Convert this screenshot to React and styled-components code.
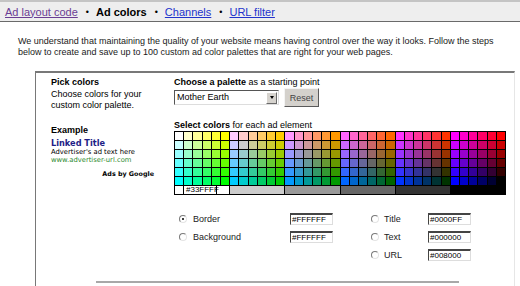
import styled, { createGlobalStyle } from 'styled-components';

const GlobalStyle = createGlobalStyle`
  html, body { margin: 0; padding: 0; background: #fff; }
  body { font-family: "Liberation Sans", Arial, sans-serif; color: #000; }
`;

const TabBar = styled.div`
  display: flex;
  align-items: center;
  height: 19px;
  padding-left: 5px;
  background: #eeeeee;
  border-top: 2px solid #c4c4c4;
  border-bottom: 1px solid #6a6a6a;
  font-size: 11px;
  white-space: nowrap;
`;

const TabLink = styled.a`
  color: ${p => (p.$visited ? '#6a3d94' : '#2233cc')};
  text-decoration: underline;
  cursor: pointer;
`;

const TabCurrent = styled.span`
  font-weight: bold;
`;

const Dot = styled.span`
  margin: 0 7px 0 8px;
  font-size: 9px;
`;

const Intro = styled.p`
  margin: 14px 0 0 18px;
  font-size: 9px;
  line-height: 11px;
  white-space: nowrap;
  color: #1a1a1a;
`;

const Panel = styled.div`
  margin: 13px 0 0 35px;
  width: 478px;
  border-top: 2px solid #787878;
  border-left: 1px solid #787878;
  border-right: 1px solid #e6e6e6;
  min-height: 220px;
`;

const PanelBody = styled.div`
  display: flex;
  padding-top: 4px;
`;

const LeftCol = styled.div`
  width: 123px;
  padding-left: 15px;
  font-size: 9px;
  line-height: 11.5px;
`;

const RightCol = styled.div`
  flex: 1;
  font-size: 9px;
  line-height: 11px;
`;

const Heading = styled.div`
  white-space: nowrap;
  margin-top: ${p => p.$top || 0}px;
  b { font-weight: bold; }
`;

const AdBox = styled.div`
  width: 103px;
  margin-top: 3px;
  font-family: "DejaVu Sans", Verdana, sans-serif;
`;

const AdTitle = styled.div`
  color: #1e1e86;
  font-weight: bold;
  font-size: 8.2px;
  line-height: 9px;
`;

const AdLine = styled.div`
  color: ${p => p.$color || '#000'};
  font-size: 6.8px;
  line-height: 8.4px;
  white-space: nowrap;
`;

const AdsBy = styled.div`
  text-align: right;
  font-weight: bold;
  font-size: 6.4px;
  line-height: 8px;
  margin-top: 5px;
`;

const SelectRow = styled.div`
  display: flex;
  align-items: center;
  gap: 5px;
  height: 19px;
`;

const FakeSelect = styled.div`
  display: flex;
  align-items: center;
  justify-content: space-between;
  box-sizing: border-box;
  width: 105px;
  height: 15px;
  padding-left: 2px;
  background: #fff;
  border: 1px solid;
  border-color: #555 #ddd #ddd #555;
  font-size: 9px;
`;

const SelectArrow = styled.span`
  display: flex;
  align-items: center;
  justify-content: center;
  box-sizing: border-box;
  width: 11px;
  height: 12px;
  background: #d6d3ce;
  border: 1px solid;
  border-color: #fff #6a6a6a #6a6a6a #fff;
  margin-right: 1px;
  &::after {
    content: '';
    border-left: 2.5px solid transparent;
    border-right: 2.5px solid transparent;
    border-top: 3px solid #000;
  }
`;

const Button = styled.button`
  box-sizing: border-box;
  width: 35px;
  height: 19px;
  padding: 0;
  background: #d4d1cc;
  border: 1px solid;
  border-color: #f4f4f4 #5a5a5a #5a5a5a #f4f4f4;
  font-family: "Liberation Sans", Arial, sans-serif;
  font-size: 9px;
  color: #444;
`;

const Palette = styled.div`
  position: relative;
  display: grid;
  grid-template-columns: repeat(36, 1fr);
  grid-auto-rows: 8px;
  gap: 1px;
  padding: 1px;
  width: 332px;
  box-sizing: border-box;
  background: #000;
`;

const Swatch = styled.div`
  position: relative;
  background: ${p => p.$c};
  grid-column: span ${p => p.$span || 1};
`;

const HexTip = styled.span`
  position: absolute;
  left: 8px;
  top: -1px;
  box-sizing: border-box;
  width: 34px;
  height: 10px;
  background: #fff;
  border: 1px solid #000;
  font-size: 8px;
  line-height: 8px;
  padding-left: 2px;
`;

const Fields = styled.div`
  display: flex;
  gap: 38px;
  margin: 15px 0 0 5px;
`;

const FieldGroup = styled.div`
  display: grid;
  grid-template-columns: 8px ${p => p.$label}px 43px;
  grid-auto-rows: 18px;
  align-items: center;
`;

const Radio = styled.span`
  position: relative;
  box-sizing: border-box;
  width: 8px;
  height: 8px;
  border-radius: 50%;
  background: #fff;
  border: 1px solid;
  border-color: #7a7a7a #e4e4e4 #e4e4e4 #7a7a7a;
  ${p => p.$on && `
    &::after {
      content: '';
      position: absolute;
      left: 2px; top: 2px;
      width: 2px; height: 2px;
      border-radius: 50%;
      background: #000;
    }
  `}
`;

const FieldLabel = styled.span`
  padding-left: ${p => p.$pad}px;
  font-size: 9px;
  color: #222;
`;

const HexInput = styled.span`
  box-sizing: border-box;
  width: 43px;
  height: 12px;
  padding-left: 1px;
  background: #fff;
  border: 1px solid;
  border-width: 2px 1px 1px 1px;
  border-color: #444 #ddd #ddd #444;
  font-size: 8px;
  line-height: 9px;
  overflow: hidden;
  white-space: nowrap;
`;

const Rule = styled.div`
  margin: 17px 0 0 60px;
  width: 363px;
  height: 2px;
  background: #a8a8a8;
`;

const hex = v => v.toString(16).padStart(2, '0');
const steps = [255, 204, 153, 102, 51, 0];

const grays = ['#ffffff', '#cccccc', '#999999', '#666666', '#333333', '#000000'];

const leftFields = [
  { label: 'Border', value: '#FFFFFF', on: true },
  { label: 'Background', value: '#FFFFFF' },
];

const rightFields = [
  { label: 'Title', value: '#0000FF' },
  { label: 'Text', value: '#000000' },
  { label: 'URL', value: '#008000' },
];

const FieldRow = ({ f, pad }) => (
  <>
    <Radio $on={f.on} />
    <FieldLabel $pad={pad}>{f.label}</FieldLabel>
    <HexInput>{f.value}</HexInput>
  </>
);

const App = () => {
  return (
    <>
      <GlobalStyle />
      <TabBar>
        <TabLink $visited>Ad layout code</TabLink>
        <Dot>•</Dot>
        <TabCurrent>Ad colors</TabCurrent>
        <Dot>•</Dot>
        <TabLink>Channels</TabLink>
        <Dot>•</Dot>
        <TabLink>URL filter</TabLink>
      </TabBar>
      <Intro>
        We understand that maintaining the quality of your website means having control over the way it looks. Follow the steps
        <br />
        below to create and save up to 100 custom ad color palettes that are right for your web pages.
      </Intro>
      <Panel>
        <PanelBody>
          <LeftCol>
            <Heading><b>Pick colors</b></Heading>
            <div>Choose colors for your</div>
            <div>custom color palette.</div>
            <Heading $top={13}><b>Example</b></Heading>
            <AdBox>
              <AdTitle>Linked Title</AdTitle>
              <AdLine>Advertiser's ad text here</AdLine>
              <AdLine $color="#2e8a2e">www.advertiser-url.com</AdLine>
              <AdsBy>Ads by Google</AdsBy>
            </AdBox>
          </LeftCol>
          <RightCol>
            <Heading><b>Choose a palette</b> as a starting point</Heading>
            <SelectRow>
              <FakeSelect>
                Mother Earth
                <SelectArrow />
              </FakeSelect>
              <Button>Reset</Button>
            </SelectRow>
            <Heading $top={13}><b>Select colors</b> for each ad element</Heading>
            <Palette>
              {/* web-safe colours: rows by red, blocks of six by green, columns by blue */}
              {steps.map(r =>
                steps.map(g =>
                  steps.map(b => (
                    <Swatch key={`${r}-${g}-${b}`} $c={`#${hex(r)}${hex(g)}${hex(b)}`} />
                  ))
                )
              )}
              {grays.map((c, i) => (
                <Swatch key={c} $c={c} $span={6}>
                  {i === 0 && <HexTip>#33FFFF</HexTip>}
                </Swatch>
              ))}
            </Palette>
            <Fields>
              <FieldGroup $label={103}>
                {leftFields.map(f => (
                  <FieldRow key={f.label} f={f} pad={6} />
                ))}
              </FieldGroup>
              <FieldGroup $label={49}>
                {rightFields.map(f => (
                  <FieldRow key={f.label} f={f} pad={5} />
                ))}
              </FieldGroup>
            </Fields>
          </RightCol>
        </PanelBody>
        <Rule />
      </Panel>
    </>
  );
};

export default App;
